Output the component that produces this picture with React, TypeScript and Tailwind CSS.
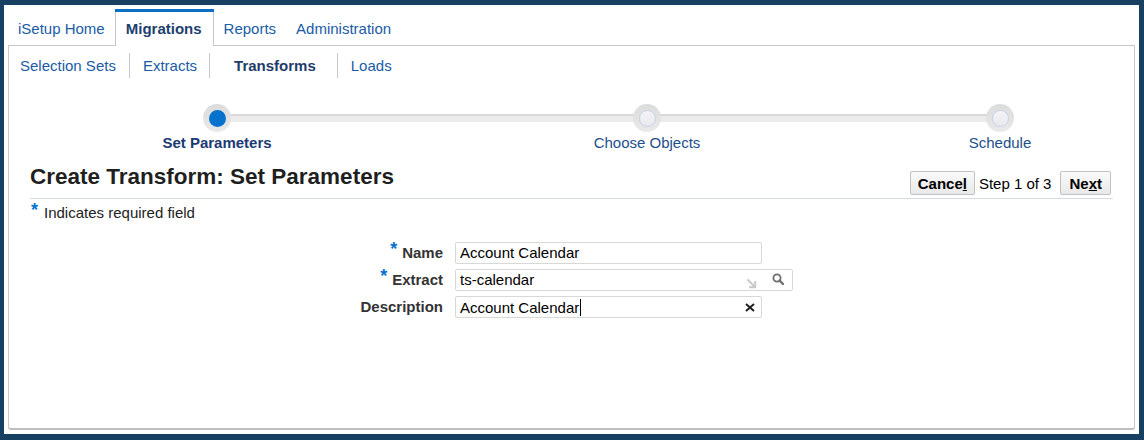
import React from "react";

const tabs = [
  { label: "iSetup Home", active: false },
  { label: "Migrations", active: true },
  { label: "Reports", active: false },
  { label: "Administration", active: false },
];

const steps = [
  { label: "Set Parameters", active: true, cls: "ml-[108px]" },
  { label: "Choose Objects", active: false, cls: "ml-[230px]" },
  { label: "Schedule", active: false, cls: "ml-[153px]" },
];

function TopTabs() {
  return (
    <div className="flex h-[37px] shrink-0">
      {tabs.map((t) =>
        t.active ? (
          <div key={t.label} className="flex flex-col">
            <div className="h-[3px] bg-[#0b70c5]" />
            <a className="flex-1 cursor-pointer border-x border-[#c6c6c6] pl-[10px] pr-[11px] pt-[8px] font-bold text-[#1c3f6e]">
              {t.label}
            </a>
          </div>
        ) : (
          <a
            key={t.label}
            className="h-full cursor-pointer border-b border-[#c6c6c6] px-[10px] pt-[11px] text-[#1a5ca6]"
          >
            {t.label}
          </a>
        )
      )}
      <div className="flex-1 border-b border-[#c6c6c6]" />
    </div>
  );
}

function SubTabs() {
  return (
    <div className="flex pt-[7px]">
      <a className="h-[25px] pl-[11px] pr-[13px] pt-[4px] text-[#1a5ca6]">Selection Sets</a>
      <a className="h-[25px] border-l border-[#c9c9c9] pl-[13px] pr-[12px] pt-[4px] text-[#1a5ca6]">Extracts</a>
      <a className="h-[25px] border-l border-[#c9c9c9] pl-[24px] pr-[21px] pt-[4px] font-bold text-[#1e3c6b]">Transforms</a>
      <a className="h-[25px] border-l border-[#c9c9c9] px-[13px] pt-[4px] text-[#1a5ca6]">Loads</a>
    </div>
  );
}

function StopDot({ active }: { active: boolean }) {
  return (
    <div className="relative z-10 flex h-[28px] w-[28px] items-center justify-center rounded-full bg-gradient-to-b from-[#dcdcdc] to-[#e9e9e9]">
      {active ? (
        <div className="h-[17px] w-[17px] rounded-full bg-[#0572ce]" />
      ) : (
        <div className="h-[17px] w-[17px] rounded-full border border-[#c7d3e2] bg-gradient-to-b from-[#f4f4f8] to-[#e8e8ee]" />
      )}
    </div>
  );
}

function Train() {
  return (
    <div className="relative mt-[26px] flex">
      <div className="absolute left-[208px] top-[10px] h-[8px] w-[783px] border-t-2 border-[#d9d9d9] bg-[#ebebeb]" />
      {steps.map((s) => (
        <div key={s.label} className={`flex w-[200px] flex-col items-center ${s.cls}`}>
          <StopDot active={s.active} />
          <span
            className={`mt-[2px] ${
              s.active ? "font-bold text-[#1b3a73]" : "text-[#1e4f8a]"
            }`}
          >
            {s.label}
          </span>
        </div>
      ))}
    </div>
  );
}

function Header() {
  return (
    <div className="mx-[21px] mt-[13px] flex items-start justify-between border-b border-[#d4dde6] pb-[3px]">
      <h1 className="text-[22.5px] font-bold leading-[26px] text-[#1f1f1f]">
        Create Transform: Set Parameters
      </h1>
      <div className="mt-[7px] flex items-center pr-[2px] text-black">
        <button className="h-[24px] rounded-[2px] border border-[#c2c2c2] bg-gradient-to-b from-[#fafafa] to-[#e9e9e9] px-[7px] font-bold">
          Cance<span className="underline">l</span>
        </button>
        <span className="ml-[4px] mr-[9px]">Step 1 of 3</span>
        <button className="h-[24px] rounded-[2px] border border-[#c2c2c2] bg-gradient-to-b from-[#fafafa] to-[#e9e9e9] px-[8px] font-bold">
          Ne<span className="underline">x</span>t
        </button>
      </div>
    </div>
  );
}

function Req() {
  return <span className="relative -top-[3px] mr-[5px] text-[18px] font-bold leading-[17px] text-[#0572ce]">*</span>;
}

function Form() {
  return (
    <div className="mt-[21px] grid grid-cols-[434px_auto] gap-x-[12px] gap-y-[5px]">
      <label className="flex h-[22px] items-center justify-end pb-[2px] font-bold text-[#333]">
        <Req />
        Name
      </label>
      <div className="flex h-[22px] w-[307px] items-center rounded-[2px] border border-[#d8d8d8] pb-[2px] pl-[4px] text-black">
        Account Calendar
      </div>

      <label className="flex h-[22px] items-center justify-end pb-[2px] font-bold text-[#333]">
        <Req />
        Extract
      </label>
      <div className="flex h-[22px] w-[338px] items-center rounded-[2px] border border-[#d8d8d8] pl-[4px] text-black">
        <span className="-mt-[2px] flex-1">ts-calendar</span>
        <svg width="11" height="11" viewBox="0 0 11 11" className="mr-[15px] mt-[6px]">
          <path d="M1.5 1.5 L9 9 M3 9.2 H9.2 V3" fill="none" stroke="#c9c9c9" strokeWidth="2" />
        </svg>
        <svg width="12" height="12" viewBox="0 0 12 12" className="mb-[3px] mr-[8px]">
          <circle cx="5" cy="5" r="3.6" fill="none" stroke="#6f6f6f" strokeWidth="1.8" />
          <path d="M7.6 7.6 L11 11" stroke="#6f6f6f" strokeWidth="2.4" strokeLinecap="round" />
        </svg>
      </div>

      <label className="flex h-[22px] items-center justify-end pb-[2px] font-bold text-[#333]">Description</label>
      <div className="flex h-[22px] w-[307px] items-center rounded-[2px] border border-[#d8d8d8] pl-[4px] text-black">
        <span className="-mt-[2px] flex-1">
          Account Calendar
          <span className="ml-px inline-block h-[17px] w-px translate-y-[3px] bg-black" />
        </span>
        <svg width="10" height="9" viewBox="0 0 10 9" className="mr-[6px]">
          <path d="M1 1 L9 8 M9 1 L1 8" stroke="#1f1f1f" strokeWidth="2" />
        </svg>
      </div>
    </div>
  );
}

export default function App() {
  return (
    <div className="h-[440px] w-[1144px] bg-[#174062] pb-[6px] pl-[4px] pr-[5px] pt-[5px] font-['Liberation_Sans',Arial,sans-serif] text-[15px] leading-[17px]">
      <div className="flex h-full flex-col bg-white p-[4px]">
        <TopTabs />
        <div className="flex-1 rounded-b-[3px] border-x border-b-2 border-x-[#c8c8c8] border-b-[#bebebe]">
          <SubTabs />
          <Train />
          <Header />
          <div className="ml-[22px] mt-[5px] flex items-start text-[#222]">
            <span className="relative -top-[2px] mr-[6px] text-[18px] font-bold leading-[17px] text-[#0572ce]">*</span>
            Indicates required field
          </div>
          <Form />
        </div>
      </div>
    </div>
  );
}
